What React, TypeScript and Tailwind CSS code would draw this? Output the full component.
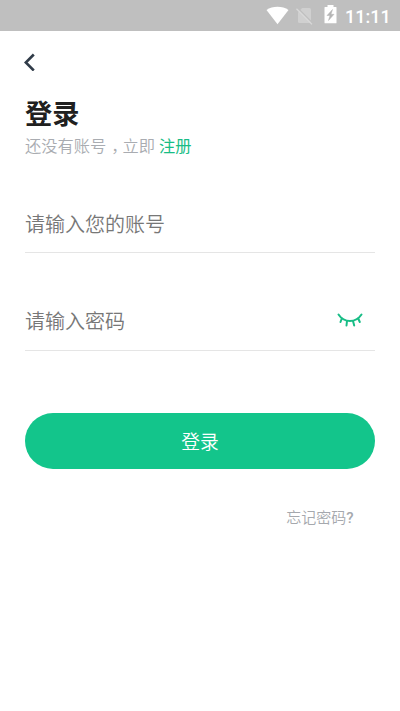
import React from "react";

function StatusBar() {
  return (
    <header className="flex h-[31px] shrink-0 items-start justify-end bg-[#bfbfbf] pr-[11px] text-white">
      <svg className="mt-[6px] h-[19px] w-[23px]" viewBox="0 0 23 19" fill="currentColor">
        <path d="M.5 4C6.5-.4 16.5-.4 22.5 4L11.5 18.2Z" />
      </svg>
      <svg className="ml-[7px] mt-[7px] h-[18px] w-[17px]" viewBox="0 0 17 18">
        <path d="M6.2 1H13.5Q15 1 15 2.5V16H3.5Q2 16 2 14.5V5.2Z" fill="#d0d0d0" />
        <path d="M1.500 .8 17 16.300" stroke="#bfbfbf" strokeWidth="1.300" />
        <path d="M.5 1.800 16 17.400" stroke="#d9d9d9" strokeWidth="1.300" />
      </svg>
      <svg className="ml-[11px] mt-[5px] h-[19px] w-[13px]" viewBox="0 0 13 19">
        <path d="M3.5 0h6v2H12q.5 0 .5.5v15.300q0 .5-.5.5H1q-.5 0-.5-.5V2.500Q.5 2 1 2h2.500Z" fill="white" />
        <path d="M8.500 4.500 3 10.500H6L4.500 15.500 10 9.300H7Z" fill="#b5b5b5" stroke="#b5b5b5" strokeWidth=".5" />
      </svg>
      <time className="ml-[8px] mt-[6px] w-[44px] whitespace-nowrap text-right font-[Roboto,sans-serif] text-[18px] font-medium leading-[21px]">11:11</time>
    </header>
  );
}

function ClosedEye() {
  return (
    <svg className="h-[14px] w-[26px]" viewBox="0 0 26 14" fill="none" stroke="#18bd86" strokeWidth="2" strokeLinecap="round">
      <path d="M1.500 1.500C5 6.800 9 8.100 13 8.100S21 6.800 24.500 1.500" />
      <path d="M4.800 5.500 3.500 9M10 8 9.500 12.500M16 8l1.200 4.500M21.200 5.500 22.800 9" />
    </svg>
  );
}

export default function App() {
  return (
    <div className="flex h-[711px] w-[400px] flex-col bg-white font-['Noto_Sans_CJK_SC',sans-serif] font-[350]" lang="zh-CN">
      <StatusBar />
      <main className="flex flex-col px-[25px]">
        <button className="mt-[21px] flex h-5 w-5 items-center" aria-label="返回">
          <svg className="-ml-[1px] h-[18px] w-3" viewBox="0 0 12 18" fill="none" stroke="#303b48" strokeWidth="2.600">
            <path d="M9.800 1.500 1.800 9.500 9.800 17.500" />
          </svg>
        </button>
        <h1 className="mt-[22px] h-9 text-[27.200px] font-bold leading-9 text-[#202020]">登录</h1>
        <p className="mt-[3px] flex h-6 whitespace-nowrap text-[16.250px] leading-6 text-[#a9acb1]">
          <span>还没有账号</span>
          <span className="w-[16.250px] pl-[5px] [font-feature-settings:'halt']">，</span>
          <span>立即</span>
          <a className="ml-1 font-normal text-[#18bd86]">注册</a>
        </p>
        <div className="mt-[52px] flex h-[44px] items-start border-b border-[#e5e5e5] text-[20px] leading-[30px] text-[#777]">
          请输入您的账号
        </div>
        <div className="mt-[53px] flex h-[45px] items-start justify-between border-b border-[#e5e5e5] pr-3 text-[20px] leading-[30px] text-[#777]">
          <span>请输入密码</span>
          <span className="mt-[7px]"><ClosedEye /></span>
        </div>
        <button className="mt-[62px] flex h-14 items-center justify-center rounded-full bg-[#13c58b] text-[18.750px] font-[350] text-white">登录</button>
        <a className="mt-[36px] self-end pr-[21.500px] text-[15px] leading-6 text-[#a5a8ad]">忘记密码<span className="font-[Roboto,sans-serif] font-medium">?</span></a>
      </main>
    </div>
  );
}
